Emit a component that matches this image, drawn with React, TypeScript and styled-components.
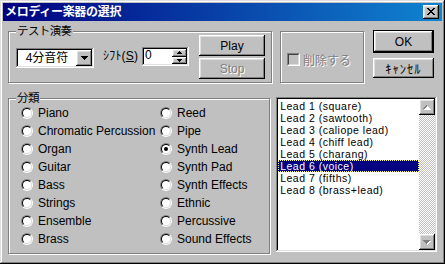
import React from 'react'
import styled, { createGlobalStyle, css } from 'styled-components'

const GlobalStyle = createGlobalStyle`
  html, body {
    margin: 0;
    padding: 0;
    background: #c0c0c0;
  }
  body {
    font-family: "Liberation Sans", "Noto Sans CJK JP", sans-serif;
    font-size: 12px;
    color: #000;
  }
`

const raised = css`
  box-shadow: inset -1px -1px #000, inset 1px 1px #fff, inset -2px -2px #808080, inset 2px 2px #dfdfdf;
`

const sunken = css`
  box-shadow: inset -1px -1px #fff, inset 1px 1px #808080, inset -2px -2px #dfdfdf, inset 2px 2px #000;
`

const disabledText = css`
  color: #808080;
  text-shadow: 1px 1px 0 #fff;
`

const Window = styled.div`
  width: 445px;
  height: 264px;
  box-sizing: border-box;
  padding: 3px;
  background: #c0c0c0;
  box-shadow: inset -1px -1px #000, inset 1px 1px #dfdfdf, inset -2px -2px #808080, inset 2px 2px #fff;
  display: flex;
  flex-direction: column;
`

const TitleBar = styled.div`
  height: 18px;
  flex: none;
  display: flex;
  align-items: center;
  justify-content: space-between;
  padding: 0 3px 0 2px;
  background: linear-gradient(90deg, #000080, #1084d0);
`

const Title = styled.span`
  color: #fff;
  font-weight: bold;
  font-size: 12px;
  line-height: 18px;
  letter-spacing: -0.3px;
`

const CloseButton = styled.span`
  width: 16px;
  height: 14px;
  box-sizing: border-box;
  ${raised};
  background: #c0c0c0;
  display: flex;
  align-items: center;
  justify-content: center;
  padding: 0 1px 1px 0;
`

const Body = styled.div`
  padding: 10px 5px 0 5px;
  display: flex;
  flex-direction: column;
`

const Row = styled.div<{ $top?: number }>`
  display: flex;
  align-items: flex-start;
  margin-top: ${(p) => p.$top ?? 0}px;
`

const Group = styled.div<{ $w: number; $h: number; $ml?: number }>`
  position: relative;
  box-sizing: border-box;
  width: ${(p) => p.$w}px;
  height: ${(p) => p.$h}px;
  margin-left: ${(p) => p.$ml ?? 0}px;
  border: 1px solid #808080;
  box-shadow: 1px 1px 0 #fff, inset 1px 1px 0 #fff;
  display: flex;
  align-items: flex-start;
`

const Legend = styled.span`
  position: absolute;
  top: -8px;
  left: 7px;
  padding: 0 1px;
  background: #c0c0c0;
  font-size: 11.5px;
  line-height: 14px;
  letter-spacing: -0.6px;
`

const Combo = styled.div`
  width: 78px;
  height: 20px;
  box-sizing: border-box;
  padding: 2px;
  margin: 16px 0 0 7px;
  background: #fff;
  ${sunken};
  display: flex;
`

const ComboText = styled.span`
  flex: 1;
  text-align: center;
  line-height: 16px;
`

const DropButton = styled.span`
  width: 16px;
  height: 16px;
  box-sizing: border-box;
  background: #c0c0c0;
  ${raised};
  display: flex;
  align-items: center;
  justify-content: center;
`

const ShiftLabel = styled.span`
  width: 39px;
  margin: 17px 0 0 9px;
  line-height: 14px;
  letter-spacing: 0.2px;
  white-space: nowrap;
`

const Spin = styled.div`
  width: 47px;
  height: 19px;
  box-sizing: border-box;
  padding: 2px;
  margin-top: 15px;
  background: #fff;
  ${sunken};
  display: flex;
`

const SpinValue = styled.span`
  flex: 1;
  padding-left: 1px;
  line-height: 12px;
`

const SpinButtons = styled.div`
  width: 15px;
  display: flex;
  flex-direction: column;
`

const SpinButton = styled.span`
  flex: 1;
  background: #c0c0c0;
  ${raised};
  display: flex;
  align-items: center;
  justify-content: center;
`

const ButtonColumn = styled.div<{ $ml: number; $mt: number }>`
  display: flex;
  flex-direction: column;
  margin: ${(p) => p.$mt}px 0 0 ${(p) => p.$ml}px;
`

const Button = styled.button<{ $w: number; $h: number; $mt?: number; $default?: boolean; $spread?: boolean }>`
  width: ${(p) => p.$w}px;
  height: ${(p) => p.$h}px;
  margin-top: ${(p) => p.$mt ?? 0}px;
  box-sizing: border-box;
  padding: 0;
  border: ${(p) => (p.$default ? '1px solid #000' : 'none')};
  background: #c0c0c0;
  ${raised};
  font: inherit;
  font-size: ${(p) => (p.$spread ? '12.5px' : '12px')};
  letter-spacing: ${(p) => (p.$spread ? '1px' : 'normal')};
  color: #000;
  &:disabled {
    ${disabledText};
  }
`

const CheckRow = styled.label`
  display: flex;
  align-items: center;
  gap: 3px;
  margin: 19px 0 0 6px;
  ${disabledText};
`

const CheckBox = styled.span`
  position: relative;
  width: 13px;
  height: 13px;
  box-sizing: border-box;
  border: 1px solid;
  border-color: #808080 #fff #fff #808080;
  &::before {
    content: '';
    position: absolute;
    inset: 0;
    border: 1px solid;
    border-color: #404040 #dfdfdf #dfdfdf #404040;
    background: #c0c0c0;
  }
`

const RadioGrid = styled.div`
  display: grid;
  grid-template-columns: 139px auto;
  grid-template-rows: repeat(8, 18px);
  grid-auto-flow: column;
  padding: 5px 0 0 12px;
`

const RadioItem = styled.label`
  display: flex;
  align-items: center;
  gap: 5px;
  white-space: nowrap;
`

const RadioCircle = styled.span<{ $checked?: boolean }>`
  position: relative;
  flex: none;
  width: 12px;
  height: 12px;
  box-sizing: border-box;
  border-radius: 50%;
  border: 1px solid;
  border-color: #808080 #fff #fff #808080;
  &::before {
    content: '';
    position: absolute;
    inset: 0;
    border-radius: 50%;
    border: 1px solid;
    border-color: #000 #dfdfdf #dfdfdf #000;
    background: #fff;
  }
  &::after {
    content: '';
    display: ${(p) => (p.$checked ? 'block' : 'none')};
    position: absolute;
    left: 3px;
    top: 3px;
    width: 4px;
    height: 4px;
    border-radius: 50%;
    background: #000;
  }
`

const ListBox = styled.div`
  width: 162px;
  height: 155px;
  box-sizing: border-box;
  margin: -1px 0 0 6px;
  padding: 2px;
  background: #fff;
  ${sunken};
  display: flex;
`

const Items = styled.div`
  flex: 1;
  padding-top: 1px;
`

const Item = styled.div<{ $selected?: boolean }>`
  height: 12px;
  box-sizing: border-box;
  font-size: 10.5px;
  letter-spacing: 0.5px;
  line-height: 12px;
  padding-left: 2px;
  white-space: nowrap;
  background: ${(p) => (p.$selected ? '#000080' : 'transparent')};
  color: ${(p) => (p.$selected ? '#fff' : '#000')};
  outline: ${(p) => (p.$selected ? '1px dotted #ffff80' : 'none')};
  outline-offset: -1px;
`

const ScrollBar = styled.div`
  width: 16px;
  display: flex;
  flex-direction: column;
`

const ScrollButton = styled.span`
  width: 16px;
  height: 16px;
  box-sizing: border-box;
  background: #c0c0c0;
  ${raised};
  display: flex;
  align-items: center;
  justify-content: center;
`

const Track = styled.div`
  flex: 1;
  background-image: conic-gradient(#c0c0c0 25%, #fff 0 50%, #c0c0c0 0 75%, #fff 0);
  background-size: 2px 2px;
`

const CloseIcon = () => (
  <svg width="8" height="7" viewBox="0 0 8 7" shapeRendering="crispEdges">
    <path
      d="M0 0h2v1h-2zM6 0h2v1h-2zM1 1h2v1h-2zM5 1h2v1h-2zM2 2h4v1h-4zM3 3h2v1h-2zM2 4h4v1h-4zM1 5h2v1h-2zM5 5h2v1h-2zM0 6h2v1h-2zM6 6h2v1h-2z"
      fill="#000"
    />
  </svg>
)

const DownArrow = ({ size = 7 }: { size?: number }) => {
  const rows = Math.ceil(size / 2)
  return (
    <svg width={size} height={rows} viewBox={`0 0 ${size} ${rows}`} shapeRendering="crispEdges">
      {Array.from({ length: rows }, (_, i) => (
        <rect key={i} x={i} y={i} width={size - i * 2} height={1} fill="#000" />
      ))}
    </svg>
  )
}

const UpArrow = ({ size = 5 }: { size?: number }) => {
  const rows = Math.ceil(size / 2)
  return (
    <svg width={size} height={rows} viewBox={`0 0 ${size} ${rows}`} shapeRendering="crispEdges">
      {Array.from({ length: rows }, (_, i) => (
        <rect key={i} x={rows - 1 - i} y={i} width={size - (rows - 1 - i) * 2} height={1} fill="#000" />
      ))}
    </svg>
  )
}

// disabled scroll arrows: gray glyph with a white shadow
const GrayArrow = ({ up }: { up?: boolean }) => (
  <svg width="8" height="5" viewBox="0 0 8 5" shapeRendering="crispEdges">
    {[0, 1, 2, 3].map((i) => {
      const y = up ? 3 - i : i
      return (
        <g key={i}>
          <rect x={i + 1} y={y + 1} width={7 - i * 2} height={1} fill="#fff" />
          <rect x={i} y={y} width={7 - i * 2} height={1} fill="#808080" />
        </g>
      )
    })}
  </svg>
)

const categoriesLeft = ['Piano', 'Chromatic Percussion', 'Organ', 'Guitar', 'Bass', 'Strings', 'Ensemble', 'Brass']
const categoriesRight = ['Reed', 'Pipe', 'Synth Lead', 'Synth Pad', 'Synth Effects', 'Ethnic', 'Percussive', 'Sound Effects']

const leads = [
  'Lead 1 (square)',
  'Lead 2 (sawtooth)',
  'Lead 3 (caliope lead)',
  'Lead 4 (chiff lead)',
  'Lead 5 (charang)',
  'Lead 6 (voice)',
  'Lead 7 (fifths)',
  'Lead 8 (brass+lead)',
]

export default function App() {
  const category = 'Synth Lead'
  const selected = 'Lead 6 (voice)'

  return (
    <>
      <GlobalStyle />
      <Window>
        <TitleBar>
          <Title>メロディー楽器の選択</Title>
          <CloseButton>
            <CloseIcon />
          </CloseButton>
        </TitleBar>
        <Body>
          <Row>
            <Group $w={264} $h={52}>
              <Legend>テスト演奏</Legend>
              <Combo>
                <ComboText>4分音符</ComboText>
                <DropButton>
                  <DownArrow />
                </DropButton>
              </Combo>
              <ShiftLabel>
                ｼﾌﾄ(<u>S</u>)
              </ShiftLabel>
              <Spin>
                <SpinValue>0</SpinValue>
                <SpinButtons>
                  <SpinButton>
                    <UpArrow />
                  </SpinButton>
                  <SpinButton>
                    <DownArrow size={5} />
                  </SpinButton>
                </SpinButtons>
              </Spin>
              <ButtonColumn $ml={10} $mt={3}>
                <Button $w={66} $h={21}>Play</Button>
                <Button $w={66} $h={21} $mt={2} disabled>
                  Stop
                </Button>
              </ButtonColumn>
            </Group>
            <Group $w={84} $h={52} $ml={8}>
              <CheckRow>
                <CheckBox />
                削除する
              </CheckRow>
            </Group>
            <ButtonColumn $ml={9} $mt={-1}>
              <Button $w={61} $h={23} $default>
                OK
              </Button>
              <Button $w={61} $h={20} $mt={5} $spread>
                ｷｬﾝｾﾙ
              </Button>
            </ButtonColumn>
          </Row>
          <Row $top={15}>
            <Group $w={264} $h={156}>
              <Legend>分類</Legend>
              <RadioGrid>
                {[...categoriesLeft, ...categoriesRight].map((c) => (
                  <RadioItem key={c}>
                    <RadioCircle $checked={c === category} />
                    {c}
                  </RadioItem>
                ))}
              </RadioGrid>
            </Group>
            <ListBox>
              <Items>
                {leads.map((l) => (
                  <Item key={l} $selected={l === selected}>
                    {l}
                  </Item>
                ))}
              </Items>
              <ScrollBar>
                <ScrollButton>
                  <GrayArrow up />
                </ScrollButton>
                <Track />
                <ScrollButton>
                  <GrayArrow />
                </ScrollButton>
              </ScrollBar>
            </ListBox>
          </Row>
        </Body>
      </Window>
    </>
  )
}
